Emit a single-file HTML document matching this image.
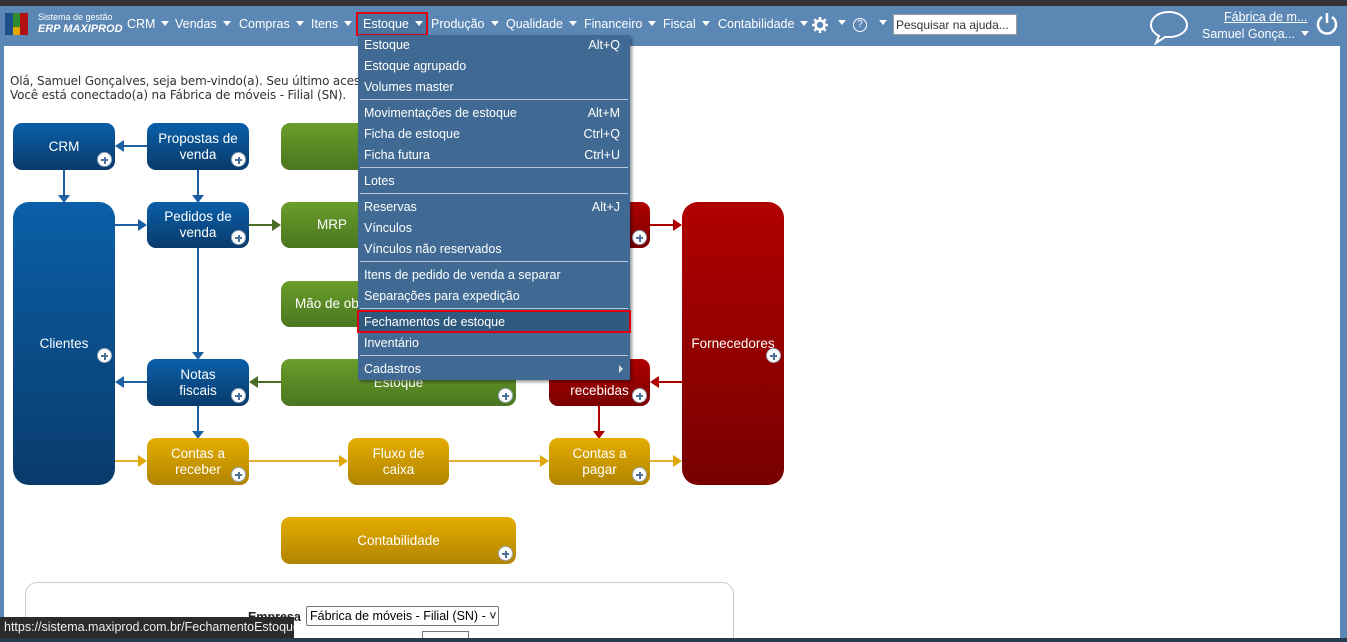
<!DOCTYPE html><html><head><meta charset="utf-8"><style>
*{margin:0;padding:0;box-sizing:border-box}
html,body{width:1347px;height:642px;overflow:hidden}
body{background:#fff;font-family:"Liberation Sans",sans-serif;position:relative}
.a{position:absolute}
#top{left:0;top:0;width:1347px;height:6px;background:#353535}
#nav{left:0;top:6px;width:1347px;height:40px;background:#5b87b4}
#lb{left:0;top:46px;width:4px;height:596px;background:#5b87b4}
#rb{left:1340px;top:46px;width:7px;height:596px;background:#5b87b4}
#bot{left:0;top:638px;width:1347px;height:4px;background:#27394d}
.n{color:#fff;font-size:12.5px;top:17px;white-space:nowrap}
.tri{display:inline-block;border-left:4px solid transparent;border-right:4px solid transparent;border-top:5px solid #fff;margin-left:6px;vertical-align:2px}
.box{position:absolute;border-radius:9px;color:#fff;font-family:"Liberation Sans",sans-serif;font-size:13.5px;text-align:center;display:flex;align-items:center;justify-content:center;line-height:16px}
.bl{background:linear-gradient(#0a5fa8,#093b6b)}
.gr{background:linear-gradient(#6a9e2b,#4a7620)}
.go{background:linear-gradient(#e5ad00,#b08400)}
.rd{background:linear-gradient(#b00000,#780000)}
.p{position:absolute;right:3px;bottom:3px;width:15px;height:15px;border-radius:50%;background:#fff;border:1px solid #9ab;}
.p:before{content:"";position:absolute;left:3px;top:6px;width:7px;height:2px;background:#4a6f9a}
.p:after{content:"";position:absolute;left:5.5px;top:3.5px;width:2px;height:7px;background:#4a6f9a}
#menu{left:358px;top:35px;width:272px;height:345px;background:#406a93;box-shadow:2px 2px 3px rgba(0,0,0,.4)}
.mi{position:absolute;left:6px;color:#fff;font-size:12.5px;white-space:nowrap}
.k{position:absolute;right:10px;color:#fff;font-size:12.5px}
.sep{position:absolute;left:2px;width:268px;height:1px;background:#b8c8d8}
</style></head><body>
<div class="a" id="top"></div><div class="a" id="nav"></div><div class="a" id="lb"></div><div class="a" id="rb"></div>
<div class="a" style="left:5px;top:13px;width:8px;height:22px;background:#1d4f8a"></div>
<div class="a" style="left:13px;top:13px;width:7px;height:22px;background:#2e8a2e"></div>
<div class="a" style="left:13px;top:27px;width:7px;height:8px;background:#e0a800"></div>
<div class="a" style="left:20px;top:13px;width:8px;height:22px;background:#b01010"></div>
<div class="a" style="left:38px;top:12px;color:#fff;font-size:9px">Sistema de gestão</div>
<div class="a" style="left:38px;top:23px;color:#fff;font-size:11px;font-style:italic;font-weight:bold">ERP MAXIPROD</div>
<div class="a n" style="left:127px">CRM<span class="tri"></span></div>
<div class="a n" style="left:175px">Vendas<span class="tri"></span></div>
<div class="a n" style="left:239px">Compras<span class="tri"></span></div>
<div class="a n" style="left:311px">Itens<span class="tri"></span></div>
<div class="a" style="left:356px;top:12px;width:72px;height:24px;border:2px solid #e00010;background:#4a75a0"></div>
<div class="a n" style="left:363px">Estoque<span class="tri"></span></div>
<div class="a n" style="left:431px">Produção<span class="tri"></span></div>
<div class="a n" style="left:506px">Qualidade<span class="tri"></span></div>
<div class="a n" style="left:584px">Financeiro<span class="tri"></span></div>
<div class="a n" style="left:663px">Fiscal<span class="tri"></span></div>
<div class="a n" style="left:718px">Contabilidade<span class="tri"></span></div>
<svg class="a" style="left:811px;top:16px" width="18" height="18"><circle cx="9" cy="9" r="4.5" fill="none" stroke="#fff" stroke-width="2.5"/><path d="M9 1v4M9 13v4M1 9h4M13 9h4M3.3 3.3l2.8 2.8M11.9 11.9l2.8 2.8M3.3 14.7l2.8-2.8M11.9 6.1l2.8-2.8" stroke="#fff" stroke-width="2.5"/></svg>
<span class="a tri" style="left:832px;top:20px"></span>
<div class="a" style="left:853px;top:18px;width:14px;height:14px;border:1.5px solid #fff;border-radius:50%;color:#fff;font-size:10px;text-align:center;line-height:11px">?</div><span class="a tri" style="left:873px;top:20px"></span>
<div class="a" style="left:893px;top:14px;width:124px;height:21px;background:#fff;border:1px solid #999;font-size:12px;color:#333;padding:3px 2px;white-space:nowrap;overflow:hidden">Pesquisar na ajuda...</div>
<svg class="a" style="left:1148px;top:9px" width="42" height="36"><path d="M21 3C10 3 3 9 3 16c0 5 4 9 8 11l-3 7 9-6c1 0 3 0 4 0 11 0 18-6 18-12S32 3 21 3z" fill="none" stroke="#fff" stroke-width="2"/></svg>
<div class="a" style="left:1224px;top:10px;color:#fff;font-size:12.5px;text-decoration:underline">Fábrica de m...</div>
<div class="a" style="left:1202px;top:27px;color:#fff;font-size:12.5px">Samuel Gonça...<span class="tri"></span></div>
<svg class="a" style="left:1314px;top:11px" width="26" height="26"><path d="M8 6A9 9 0 1 0 18 6" fill="none" stroke="#fff" stroke-width="2.5"/><path d="M13 2v10" stroke="#fff" stroke-width="2.5"/></svg>

<div class="a" style="left:10px;top:74px;font-size:12px;color:#333;line-height:14px;font-family:'DejaVu Sans',sans-serif;letter-spacing:-0.15px">Olá, Samuel Gonçalves, seja bem-vindo(a). Seu último acesso foi<br>Você está conectado(a) na Fábrica de móveis - Filial (SN).</div>

<svg class="a" style="left:0;top:0" width="800" height="580">
<path d="M147 146H122M64 170V196M198 170V196M115 225H141M198 248V353M147 382H122M198 406V432" stroke="#1d5fa3" stroke-width="2" fill="none"/>
<g fill="#1d5fa3"><path d="M115 146l9-6v12z"/><path d="M58 195h12l-6 8z"/><path d="M192 195h12l-6 8z"/><path d="M147 225l-9-6v12z"/><path d="M192 352h12l-6 8z"/><path d="M115 382l9-6v12z"/><path d="M192 431h12l-6 8z"/></g>
<path d="M249 225H275M281 382H255" stroke="#4a6e25" stroke-width="2"/><path d="M281 225l-9-6v12z M249 382l9-6v12z" fill="#4a6e25"/>
<path d="M115 461H141M249 461H342M449 461H543M650 461H676" stroke="#e8b030" stroke-width="2"/><path d="M147 461l-9-6v12z M348 461l-9-6v12z M549 461l-9-6v12z M682 461l-9-6v12z" fill="#e0a800"/>
<path d="M650 225H676M682 382H656M599 406V432" stroke="#b00000" stroke-width="2"/><path d="M682 225l-9-6v12z M650 382l9-6v12z M593 431h12l-6 8z" fill="#b00000"/>
</svg>
<div class="box bl" style="left:13px;top:123px;width:102px;height:47px">CRM<i class="p"></i></div>
<div class="box bl" style="left:147px;top:123px;width:102px;height:47px">Propostas de<br>venda<i class="p"></i></div>
<div class="box gr" style="left:281px;top:123px;width:90px;height:47px"></div>
<div class="box bl" style="left:13px;top:202px;width:102px;height:283px;border-radius:16px">Clientes<i class="p" style="top:146px;bottom:auto"></i></div>
<div class="box bl" style="left:147px;top:202px;width:102px;height:46px">Pedidos de<br>venda<i class="p"></i></div>
<div class="box gr" style="left:281px;top:202px;width:90px;height:46px;justify-content:flex-start;padding-left:36px">MRP</div>
<div class="box gr" style="left:281px;top:281px;width:90px;height:46px;justify-content:flex-start;padding-left:14px;white-space:nowrap;overflow:hidden">Mão de obra</div>
<div class="box bl" style="left:147px;top:359px;width:102px;height:47px">Notas<br>fiscais<i class="p"></i></div>
<div class="box gr" style="left:281px;top:359px;width:235px;height:47px">Estoque<i class="p"></i></div>
<div class="box rd" style="left:549px;top:202px;width:101px;height:46px"><i class="p"></i></div>
<div class="box rd" style="left:549px;top:359px;width:101px;height:47px">Notas<br>recebidas<i class="p"></i></div>
<div class="box rd" style="left:682px;top:202px;width:102px;height:283px;border-radius:16px">Fornecedores<i class="p" style="top:146px;bottom:auto"></i></div>
<div class="box go" style="left:147px;top:438px;width:102px;height:47px">Contas a<br>receber<i class="p"></i></div>
<div class="box go" style="left:348px;top:438px;width:101px;height:47px">Fluxo de<br>caixa</div>
<div class="box go" style="left:549px;top:438px;width:101px;height:47px">Contas a<br>pagar<i class="p"></i></div>
<div class="box go" style="left:281px;top:517px;width:235px;height:47px">Contabilidade<i class="p"></i></div>

<div class="a" style="left:25px;top:582px;width:709px;height:80px;border:1px solid #ccc;border-radius:12px"></div>
<div class="a" style="left:248px;top:610px;font-size:12.5px;font-weight:bold;color:#222">Empresa</div>
<div class="a" style="left:306px;top:606px;width:193px;height:20px;border:1px solid #777;border-radius:2px;font-size:12.5px;padding:2px 3px;background:#fff;white-space:nowrap;overflow:hidden">Fábrica de móveis - Filial (SN) - ˅</div>
<div class="a" style="left:422px;top:631px;width:47px;height:12px;border:1px solid #777"></div>
<div class="a" style="left:0;top:617px;width:294px;height:21px;background:#2b2b2b;color:#eee;font-size:12.5px;padding:3px 4px;white-space:nowrap;overflow:hidden">https://sistema.maxiprod.com.br/FechamentoEstoque</div>
<div class="a" id="bot"></div>

<div class="a" id="menu">
<div class="mi" style="top:3px">Estoque</div><div class="k" style="top:3px">Alt+Q</div>
<div class="mi" style="top:24px">Estoque agrupado</div>
<div class="mi" style="top:45px">Volumes master</div>
<div class="sep" style="top:64px"></div>
<div class="mi" style="top:71px">Movimentações de estoque</div><div class="k" style="top:71px">Alt+M</div>
<div class="mi" style="top:92px">Ficha de estoque</div><div class="k" style="top:92px">Ctrl+Q</div>
<div class="mi" style="top:113px">Ficha futura</div><div class="k" style="top:113px">Ctrl+U</div>
<div class="sep" style="top:132px"></div>
<div class="mi" style="top:139px">Lotes</div>
<div class="sep" style="top:158px"></div>
<div class="mi" style="top:165px">Reservas</div><div class="k" style="top:165px">Alt+J</div>
<div class="mi" style="top:186px">Vínculos</div>
<div class="mi" style="top:207px">Vínculos não reservados</div>
<div class="sep" style="top:226px"></div>
<div class="mi" style="top:233px">Itens de pedido de venda a separar</div>
<div class="mi" style="top:254px">Separações para expedição</div>
<div class="sep" style="top:273px"></div>
<div class="a" style="left:-1px;top:275px;width:274px;height:23px;border:2px solid #e00010;background:#30597f"></div>
<div class="mi" style="top:280px">Fechamentos de estoque</div>
<div class="mi" style="top:301px">Inventário</div>
<div class="sep" style="top:320px"></div>
<div class="mi" style="top:327px">Cadastros</div>
<div class="a" style="left:261px;top:330px;border-top:4px solid transparent;border-bottom:4px solid transparent;border-left:4px solid #ddd"></div>
</div>
</body></html>
